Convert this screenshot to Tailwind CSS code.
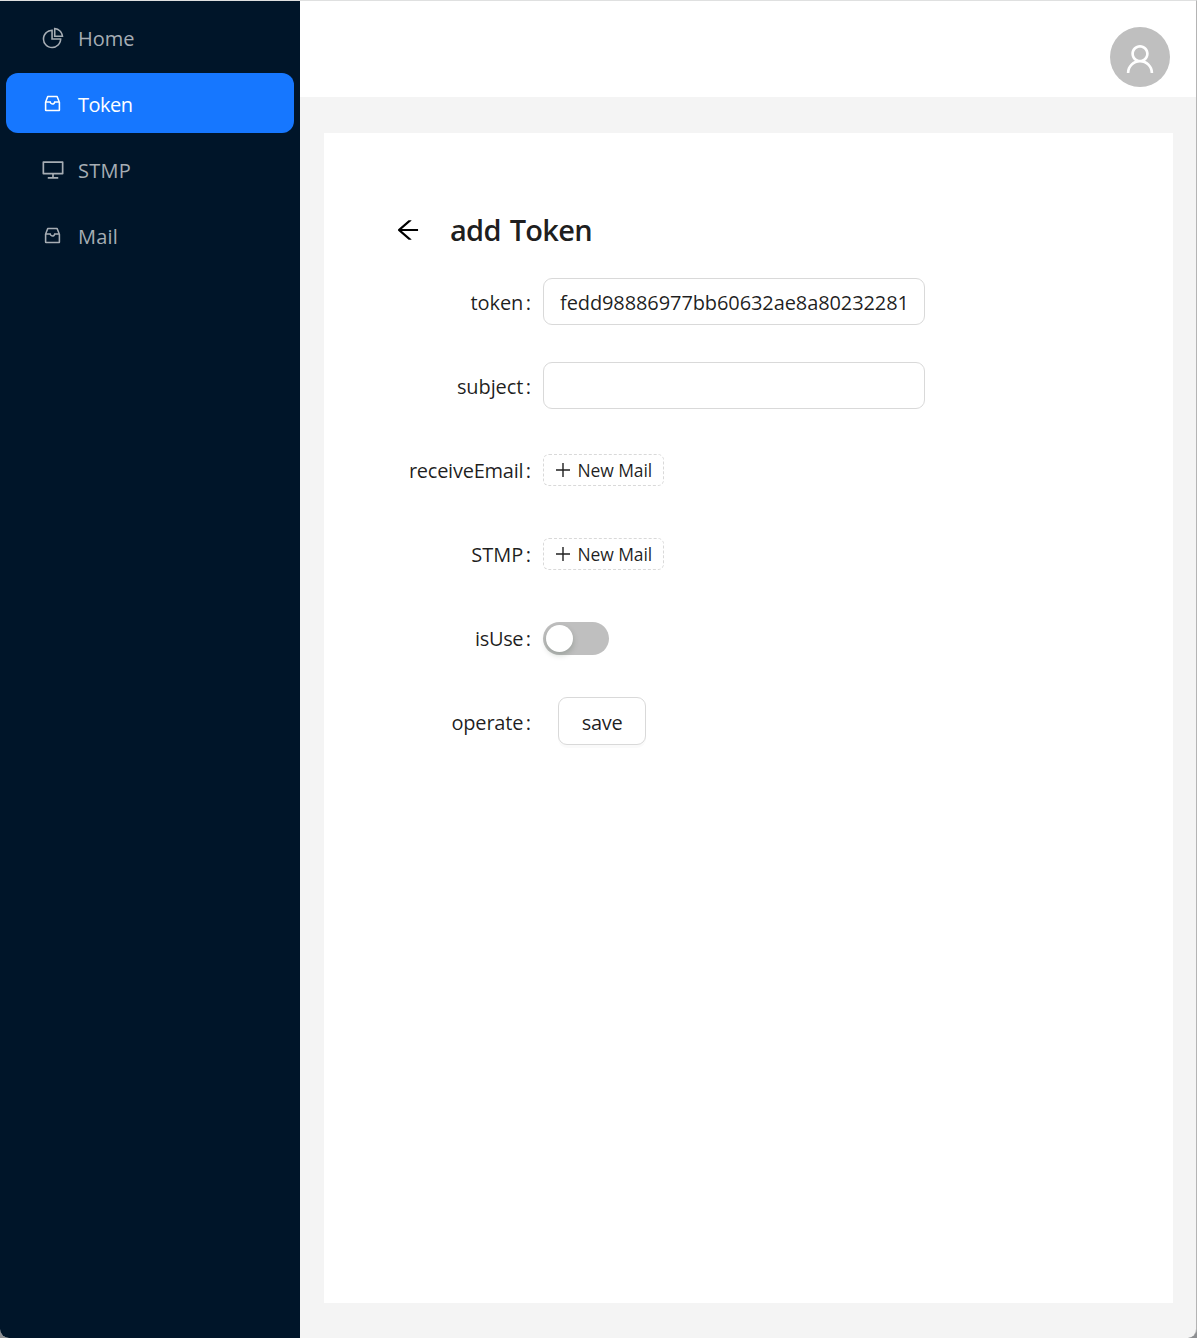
<!DOCTYPE html>
<html lang="en">
<head>
<meta charset="utf-8">
<title>add Token</title>
<script src="https://cdn.jsdelivr.net/npm/@tailwindcss/browser@4"></script>
</head>
<body class="bg-[#8d8f92] font-['Open_Sans',sans-serif] text-[20px] leading-[30px] text-black/88">
<div class="flex h-[1338px] w-[1197px] overflow-hidden rounded-b-[9px] border-t border-r border-t-[#dfe0e0] border-r-[#b4b4b4] bg-[#f4f4f4]">
  <aside class="w-[300px] shrink-0 bg-[#001529] px-1.5 pt-1.5 text-[#a6adb4]">
    <nav class="flex flex-col gap-1.5">
      <a class="flex h-[60px] items-center rounded-xl pl-[34.5px]">
        <svg class="mt-px size-6" viewBox="0 0 1024 1024" fill="currentColor"><path d="M864 518H506V160c0-4.4-3.6-8-8-8h-26a398.46 398.46 0 00-282.8 117.1 398.19 398.19 0 00-85.7 127.1A397.61 397.61 0 0072 552a398.46 398.46 0 00117.1 282.8c36.7 36.7 79.5 65.6 127.1 85.7A397.61 397.61 0 00472 952a398.46 398.46 0 00282.8-117.1c36.7-36.7 65.6-79.5 85.7-127.1A397.61 397.61 0 00872 552v-26c0-4.4-3.6-8-8-8zM705.7 787.8A331.59 331.59 0 01470.4 884c-88.1-.4-170.9-34.9-233.2-97.2C174.5 724.1 140 640.7 140 552c0-88.7 34.5-172.1 97.2-234.8 54.6-54.6 124.9-87.9 200.8-95.5V586h364.3c-7.7 76.3-41.3 147-96.6 201.8zM952 462.4l-2.6-28.2c-8.5-92.1-49.4-179-115.2-244.6A399.4 399.4 0 00589 74.6L560.7 72c-4.7-.4-8.7 3.2-8.7 7.9V464c0 4.4 3.6 8 8 8l384-1c4.7 0 8.4-4 8-8.6zm-332.2-58.2V147.6a332.24 332.24 0 01166.4 89.8c45.7 45.6 77 103.6 90 166.1l-256.4.7z"/></svg>
        <span class="pt-[3px] pl-[13.5px]">Home</span>
      </a>
      <a class="flex h-[60px] items-center rounded-xl bg-[#1677ff] pl-9 text-white">
        <svg class="size-[21px]" viewBox="0 0 1024 1024" fill="currentColor"><path d="M885.2 446.3l-.2-.8-112.2-285.1c-5-16.1-19.9-27.2-36.8-27.2H281.2c-17 0-32.1 11.3-36.9 27.6L139.4 443l-.3.7-.2.8c-1.3 4.9-1.7 9.9-1 14.8-.1 1.6-.2 3.2-.2 4.8V830a60.9 60.9 0 0060.8 60.8h627.2c33.5 0 60.8-27.3 60.9-60.8V464.1c0-1.3 0-2.6-.1-3.7.4-4.9 0-9.6-1.3-14.1zm-295.8-43l-.3 15.7c-.8 44.9-31.8 75.1-77.1 75.1-22.1 0-41.1-7.1-54.8-20.6S436 441.2 435.6 419l-.3-15.7H229.5L309 210h399.2l81.7 193.3H589.4zm-375 76.8h157.3c24.3 57.1 76 90.8 140.4 90.8 33.7 0 65-9.4 90.3-27.2 22.2-15.6 39.5-37.4 50.7-63.6h156.5V814H214.4V480.1z"/></svg>
        <span class="pt-[3px] pl-[15px] tracking-[-0.5px]">Token</span>
      </a>
      <a class="flex h-[60px] items-center rounded-xl pl-[34.5px]">
        <svg class="mt-px size-6" viewBox="0 0 1024 1024" fill="currentColor"><path d="M928 140H96c-17.7 0-32 14.3-32 32v496c0 17.7 14.3 32 32 32h380v112H304c-8.8 0-16 7.2-16 16v48c0 4.4 3.6 8 8 8h432c4.4 0 8-3.6 8-8v-48c0-8.8-7.2-16-16-16H548V700h380c17.7 0 32-14.3 32-32V172c0-17.7-14.3-32-32-32zm-40 488H136V212h752v416z"/></svg>
        <span class="pt-[3px] pl-[13.5px] tracking-[0.3px]">STMP</span>
      </a>
      <a class="flex h-[60px] items-center rounded-xl pl-9">
        <svg class="size-[21px]" viewBox="0 0 1024 1024" fill="currentColor"><path d="M885.2 446.3l-.2-.8-112.2-285.1c-5-16.1-19.9-27.2-36.8-27.2H281.2c-17 0-32.1 11.3-36.9 27.6L139.4 443l-.3.7-.2.8c-1.3 4.9-1.7 9.9-1 14.8-.1 1.6-.2 3.2-.2 4.8V830a60.9 60.9 0 0060.8 60.8h627.2c33.5 0 60.8-27.3 60.9-60.8V464.1c0-1.3 0-2.6-.1-3.7.4-4.9 0-9.6-1.3-14.1zm-295.8-43l-.3 15.7c-.8 44.9-31.8 75.1-77.1 75.1-22.1 0-41.1-7.1-54.8-20.6S436 441.2 435.6 419l-.3-15.7H229.5L309 210h399.2l81.7 193.3H589.4zm-375 76.8h157.3c24.3 57.1 76 90.8 140.4 90.8 33.7 0 65-9.4 90.3-27.2 22.2-15.6 39.5-37.4 50.7-63.6h156.5V814H214.4V480.1z"/></svg>
        <span class="pt-[3px] pl-[15px] tracking-[0.2px]">Mail</span>
      </a>
    </nav>
  </aside>

  <div class="flex grow flex-col">
    <header class="flex h-24 shrink-0 justify-end bg-white pt-[26px] pr-[26px]">
      <div class="flex size-[60px] justify-center rounded-full bg-[#bfbfbf] pt-3.5 text-white">
        <svg class="size-9" viewBox="0 0 1024 1024" fill="currentColor"><path d="M858.5 763.6a374 374 0 00-80.6-119.5 375.63 375.63 0 00-119.5-80.6c-.4-.2-.8-.3-1.2-.5C719.5 518 760 444.7 760 362c0-137-111-248-248-248S264 225 264 362c0 82.7 40.5 156 102.8 201.1-.4.2-.8.3-1.2.5-44.8 18.9-85 46-119.5 80.6a375.63 375.63 0 00-80.6 119.5A371.7 371.7 0 00136 901.8a8 8 0 008 8.2h60c4.4 0 7.9-3.5 8-7.8 2-77.2 33-149.5 87.8-204.3 56.7-56.7 132-87.9 212.2-87.9s155.5 31.2 212.2 87.9C779 752.7 810 825 812 902.2c.1 4.4 3.6 7.8 8 7.8h60a8 8 0 008-8.2c-1-47.8-10.9-94.3-29.5-138.2zM512 534c-45.9 0-89.1-17.9-121.6-50.4S340 407.9 340 362c0-45.9 17.9-89.1 50.4-121.6S466.1 190 512 190s89.1 17.9 121.6 50.4S684 316.1 684 362c0 45.9-17.9 89.1-50.4 121.6S557.9 534 512 534z"/></svg>
      </div>
    </header>

    <main class="mt-9 ml-6 h-[1170px] w-[849px] bg-white pt-[73px] pl-[70px]">
      <div class="flex h-12 items-center">
        <svg class="mb-px size-7 text-black" viewBox="0 0 1024 1024" fill="currentColor"><path d="M872 474H286.9l350.2-304c5.6-4.9 2.2-14-5.2-14h-88.5c-3.9 0-7.6 1.4-10.5 3.9L155 487.8a31.96 31.96 0 000 48.3L535.1 866c1.5 1.3 3.3 2 5.2 2h91.5c7.4 0 10.8-9.2 5.2-14L286.9 550H872c4.4 0 8-3.6 8-8v-60c0-4.4-3.6-8-8-8z"/></svg>
        <h1 class="pl-7 text-[29px] leading-[48px] font-semibold tracking-[-0.7px] [word-spacing:2px]">add Token</h1>
      </div>

      <form class="mt-6 flex flex-col gap-9">
        <div class="flex h-12">
          <div class="flex w-[149px] shrink-0 items-center justify-end pt-0.5 pr-3"><label class="tracking-[-0.1px]">token</label><span class="pl-[2.5px]">:</span></div>
          <div class="flex h-[47px] w-[382px] items-center rounded-[9px] border border-[#d9d9d9] pt-0.5 pl-4 tracking-[-0.1px]">fedd98886977bb60632ae8a80232281</div>
        </div>
        <div class="flex h-12">
          <div class="flex w-[149px] shrink-0 items-center justify-end pt-0.5 pr-3"><label class="tracking-[-0.1px]">subject</label><span class="pl-[2.5px]">:</span></div>
          <div class="h-[47px] w-[382px] rounded-[9px] border border-[#d9d9d9]"></div>
        </div>
        <div class="flex h-12 items-center">
          <div class="flex w-[149px] shrink-0 items-center justify-end pt-0.5 pr-3"><label class="tracking-[-0.25px]">receiveEmail</label><span class="pl-[2.5px]">:</span></div>
          <div class="flex h-8 w-[121px] items-center rounded-md border border-dashed border-[#d9d9d9] pl-[12px] text-[17.5px]">
            <svg class="size-[14px]" viewBox="0 0 14 14" fill="none" stroke="currentColor" stroke-width="1.4"><path d="M7 0v14M0 7h14"/></svg>
            <span class="pl-[7.5px] tracking-[-0.1px]">New Mail</span>
          </div>
        </div>
        <div class="flex h-12 items-center">
          <div class="flex w-[149px] shrink-0 items-center justify-end pt-0.5 pr-3"><label>STMP</label><span class="pl-[2.5px]">:</span></div>
          <div class="flex h-8 w-[121px] items-center rounded-md border border-dashed border-[#d9d9d9] pl-[12px] text-[17.5px]">
            <svg class="size-[14px]" viewBox="0 0 14 14" fill="none" stroke="currentColor" stroke-width="1.4"><path d="M7 0v14M0 7h14"/></svg>
            <span class="pl-[7.5px] tracking-[-0.1px]">New Mail</span>
          </div>
        </div>
        <div class="flex h-12 items-center">
          <div class="flex w-[149px] shrink-0 items-center justify-end pt-0.5 pr-3"><label class="tracking-[-0.35px]">isUse</label><span class="pl-[2.5px]">:</span></div>
          <div class="flex h-[33px] w-[66px] items-center rounded-full bg-[#bfbfbf] pl-[3px]"><span class="size-[27px] rounded-full bg-white shadow-[0_3px_6px_rgba(0,35,11,0.2)]"></span></div>
        </div>
        <div class="flex h-12 items-center">
          <div class="flex w-[149px] shrink-0 items-center justify-end pt-0.5 pr-3"><label class="tracking-[-0.2px]">operate</label><span class="pl-[2.5px]">:</span></div>
          <button type="button" class="-mt-0.5 ml-[15px] flex h-12 w-[88px] items-center justify-center rounded-[9px] border border-[#d9d9d9] bg-white pt-1 tracking-[-0.3px] shadow-[0_3px_0_rgba(0,0,0,0.02)]">save</button>
        </div>
      </form>
    </main>
  </div>
</div>
</body>
</html>
